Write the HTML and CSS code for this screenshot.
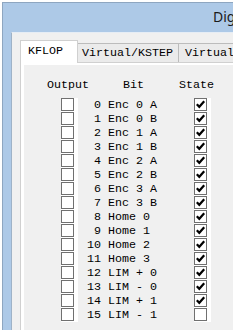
FILE: index.html
```html
<!DOCTYPE html>
<html>
<head>
<meta charset="utf-8">
<link rel="stylesheet" href="styles.css">
</head>
<body>
<div class="window">
  <div class="titlebar"><span class="title">Digital IO Screen</span></div>
  <div class="client">
    <div class="tabs">
      <div class="tab sel">KFLOP</div>
      <div class="tab t2">Virtual/KSTEP</div>
      <div class="tab t3">Virtual/KANALOG</div>
    </div>
    <div class="panel">
      <div class="dlg">
        <div class="hdr"><span class="h-out">Output</span><span class="h-bit">Bit</span><span class="h-state">State</span></div>
        <div class="rows">
          <div class="cb"><span class="box"></span></div><div class="lbl"> 0 Enc 0 A</div><div class="cb"><span class="box"><svg class="chk" viewBox="0 0 11 11"><polyline points="1.8,5.2 4.3,7.8 9.2,2.2"/></svg></span></div>
          <div class="cb"><span class="box"></span></div><div class="lbl"> 1 Enc 0 B</div><div class="cb"><span class="box"><svg class="chk" viewBox="0 0 11 11"><polyline points="1.8,5.2 4.3,7.8 9.2,2.2"/></svg></span></div>
          <div class="cb"><span class="box"></span></div><div class="lbl"> 2 Enc 1 A</div><div class="cb"><span class="box"><svg class="chk" viewBox="0 0 11 11"><polyline points="1.8,5.2 4.3,7.8 9.2,2.2"/></svg></span></div>
          <div class="cb"><span class="box"></span></div><div class="lbl"> 3 Enc 1 B</div><div class="cb"><span class="box"><svg class="chk" viewBox="0 0 11 11"><polyline points="1.8,5.2 4.3,7.8 9.2,2.2"/></svg></span></div>
          <div class="cb"><span class="box"></span></div><div class="lbl"> 4 Enc 2 A</div><div class="cb"><span class="box"><svg class="chk" viewBox="0 0 11 11"><polyline points="1.8,5.2 4.3,7.8 9.2,2.2"/></svg></span></div>
          <div class="cb"><span class="box"></span></div><div class="lbl"> 5 Enc 2 B</div><div class="cb"><span class="box"><svg class="chk" viewBox="0 0 11 11"><polyline points="1.8,5.2 4.3,7.8 9.2,2.2"/></svg></span></div>
          <div class="cb"><span class="box"></span></div><div class="lbl"> 6 Enc 3 A</div><div class="cb"><span class="box"><svg class="chk" viewBox="0 0 11 11"><polyline points="1.8,5.2 4.3,7.8 9.2,2.2"/></svg></span></div>
          <div class="cb"><span class="box"></span></div><div class="lbl"> 7 Enc 3 B</div><div class="cb"><span class="box"><svg class="chk" viewBox="0 0 11 11"><polyline points="1.8,5.2 4.3,7.8 9.2,2.2"/></svg></span></div>
          <div class="cb"><span class="box"></span></div><div class="lbl"> 8 Home 0</div><div class="cb"><span class="box"><svg class="chk" viewBox="0 0 11 11"><polyline points="1.8,5.2 4.3,7.8 9.2,2.2"/></svg></span></div>
          <div class="cb"><span class="box"></span></div><div class="lbl"> 9 Home 1</div><div class="cb"><span class="box"><svg class="chk" viewBox="0 0 11 11"><polyline points="1.8,5.2 4.3,7.8 9.2,2.2"/></svg></span></div>
          <div class="cb"><span class="box"></span></div><div class="lbl">10 Home 2</div><div class="cb"><span class="box"><svg class="chk" viewBox="0 0 11 11"><polyline points="1.8,5.2 4.3,7.8 9.2,2.2"/></svg></span></div>
          <div class="cb"><span class="box"></span></div><div class="lbl">11 Home 3</div><div class="cb"><span class="box"><svg class="chk" viewBox="0 0 11 11"><polyline points="1.8,5.2 4.3,7.8 9.2,2.2"/></svg></span></div>
          <div class="cb"><span class="box"></span></div><div class="lbl">12 LIM + 0</div><div class="cb"><span class="box"><svg class="chk" viewBox="0 0 11 11"><polyline points="1.8,5.2 4.3,7.8 9.2,2.2"/></svg></span></div>
          <div class="cb"><span class="box"></span></div><div class="lbl">13 LIM - 0</div><div class="cb"><span class="box"><svg class="chk" viewBox="0 0 11 11"><polyline points="1.8,5.2 4.3,7.8 9.2,2.2"/></svg></span></div>
          <div class="cb"><span class="box"></span></div><div class="lbl">14 LIM + 1</div><div class="cb"><span class="box"><svg class="chk" viewBox="0 0 11 11"><polyline points="1.8,5.2 4.3,7.8 9.2,2.2"/></svg></span></div>
          <div class="cb"><span class="box"></span></div><div class="lbl">15 LIM - 1</div><div class="cb"><span class="box"></span></div>
        </div>
      </div>
    </div>
  </div>
</div>
</body>
</html>
```

FILE: styles.css
```css
html, body {
  margin: 0;
  padding: 0;
  background: #ffffff;
}
body {
  width: 250px;
  height: 330px;
  overflow: hidden;
}
.window {
  margin: 2px 0 0 2px;
  width: 231px;
  height: 328px;
  box-sizing: border-box;
  background: #adc9e7;
  border-top: 1px solid #8ea6c0;
  border-left: 1px solid #8ea6c0;
  overflow: hidden;
}
.titlebar {
  height: 29px;
  box-sizing: border-box;
  padding: 4px 0 0 210px;
  white-space: nowrap;
  overflow: hidden;
}
.title {
  font-family: "Noto Sans", "Open Sans", sans-serif;
  font-size: 14px;
  color: #1a1a1a;
  line-height: 19px;
}
.client {
  margin-left: 8px;
  height: 300px;
  background: #f0f0f0;
  border-top: 1px solid #e6edf5;
  border-left: 1px solid #9eb2c7;
  padding: 7px 0 0 0;
  box-sizing: border-box;
  overflow: hidden;
}
.tabs {
  display: flex;
  align-items: flex-end;
  padding-left: 8px;
  white-space: nowrap;
}
.tab {
  flex-shrink: 0;
  font-family: "Liberation Mono", monospace;
  font-size: 11.67px;
  line-height: 13px;
  color: #000;
  box-sizing: border-box;
}
.tab.sel {
  position: relative;
  z-index: 1;
  width: 58px;
  height: 23px;
  margin-bottom: -1px;
  padding: 4px 0 0 7px;
  background: #ffffff;
  border: 1px solid #d0d0d0;
  border-bottom: none;
}
.tab.t2 {
  width: 101px;
  height: 19px;
  padding: 3px 0 0 4px;
  background: #ebebeb;
  border: 1px solid #bcbcbc;
  border-left: none;
  border-bottom: none;
}
.tab.t3 {
  width: 120px;
  height: 19px;
  padding: 3px 0 0 6px;
  background: #ebebeb;
  border-top: 1px solid #bcbcbc;
}
.panel {
  margin-left: 8px;
  width: 260px;
  height: 280px;
  box-sizing: border-box;
  background: #ffffff;
  border: 1px solid #d0d0d0;
  padding: 2px 0 0 3px;
}
.dlg {
  background: #f0f0f0;
  height: 100%;
  padding-top: 14px;
  box-sizing: border-box;
  font-family: "Liberation Mono", monospace;
  font-size: 11.67px;
  color: #000;
}
.hdr {
  display: flex;
  line-height: 13px;
  padding-left: 23px;
  white-space: pre;
}
.h-out { width: 42px; }
.h-bit { margin-left: 34px; width: 21px; }
.h-state { margin-left: 35px; }
.rows {
  display: grid;
  grid-template-columns: 17px 9px 107px 17px;
  grid-auto-rows: 14px;
  padding-left: 37px;
  margin-top: 6px;
}
.rows .lbl {
  grid-column: 3;
  white-space: pre;
  line-height: 14px;
}
.cb {
  background: #ffffff;
}
.rows .cb:first-child, .rows .lbl + .cb { }
.rows > .cb:nth-child(3n+1) { grid-column: 1; }
.rows > .cb:nth-child(3n) { grid-column: 4; }
.box {
  display: block;
  width: 13px;
  height: 13px;
  box-sizing: border-box;
  border: 1px solid #707070;
  background: #ffffff;
}
.chk {
  display: block;
  width: 11px;
  height: 11px;
  fill: none;
  stroke: #000;
  stroke-width: 2.2;
}
```
